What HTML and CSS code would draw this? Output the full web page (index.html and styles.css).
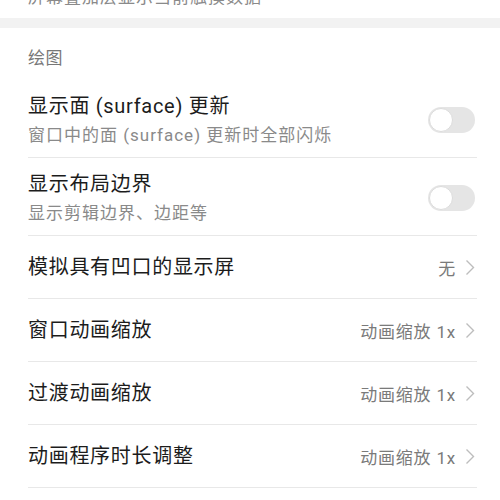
FILE: index.html
```html
<!DOCTYPE html>
<html lang="zh-CN">
<head>
  <meta charset="UTF-8">
  <meta name="viewport" content="width=device-width, initial-scale=1.0">
  <title>开发者选项</title>
  <link rel="stylesheet" href="styles.css">
</head>
<body>
  <!-- tail of the previous group, scrolled mostly out of view -->
  <div class="prev-tail">
    <p class="item-sub">屏幕叠加层显示当前触摸数据</p>
  </div>
  <div class="group-gap"></div>

  <div class="group">
    <div class="group-title">绘图</div>

    <div class="item">
      <div class="item-text">
        <div class="item-title">显示面 (surface) 更新</div>
        <div class="item-sub">窗口中的面 (surface) 更新时全部闪烁</div>
      </div>
      <div class="switch"><span class="knob"></span></div>
    </div>

    <div class="item">
      <div class="item-text">
        <div class="item-title">显示布局边界</div>
        <div class="item-sub">显示剪辑边界、边距等</div>
      </div>
      <div class="switch"><span class="knob"></span></div>
    </div>

    <div class="item single">
      <div class="item-title">模拟具有凹口的显示屏</div>
      <div class="item-value">无
        <svg class="chevron" width="10" height="17" viewBox="0 0 10 17"><polyline points="1.5,1.5 8.5,8.5 1.5,15.5" /></svg>
      </div>
    </div>

    <div class="item single">
      <div class="item-title">窗口动画缩放</div>
      <div class="item-value">动画缩放 1x
        <svg class="chevron" width="10" height="17" viewBox="0 0 10 17"><polyline points="1.5,1.5 8.5,8.5 1.5,15.5" /></svg>
      </div>
    </div>

    <div class="item single">
      <div class="item-title">过渡动画缩放</div>
      <div class="item-value">动画缩放 1x
        <svg class="chevron" width="10" height="17" viewBox="0 0 10 17"><polyline points="1.5,1.5 8.5,8.5 1.5,15.5" /></svg>
      </div>
    </div>

    <div class="item single">
      <div class="item-title">动画程序时长调整</div>
      <div class="item-value">动画缩放 1x
        <svg class="chevron" width="10" height="17" viewBox="0 0 10 17"><polyline points="1.5,1.5 8.5,8.5 1.5,15.5" /></svg>
      </div>
    </div>
  </div>
</body>
</html>
```

FILE: styles.css
```css
/* Page */
body {
  margin: 0;
  background: #fff;
  font-family: Roboto, "Noto Sans CJK SC", sans-serif;
  overflow: hidden;
}

/* Previous group, cut off at the top */
.prev-tail {
  margin-top: -16px;
  padding: 0 23px 8px 28px;
}

.prev-tail .item-sub {
  margin: 0;
}

.group-gap {
  height: 10px;
  background: #f2f2f2;
}

/* Group */
.group {
  padding: 0 23px 0 28px;
}

.group-title {
  padding: 18px 0 10px;
  font-size: 17px;
  line-height: 24px;
  color: #777;
  letter-spacing: 0.5px;
}

/* List items */
.item {
  display: flex;
  align-items: center;
  justify-content: space-between;
  padding: 12px 0 9px;
  border-bottom: 1px solid #e8e8e8;
}

.item.single {
  height: 63px;
  padding: 0;
  box-sizing: border-box;
}

.item-title {
  font-size: 20px;
  line-height: 28px;
  color: #1c1c1c;
  letter-spacing: 0.7px;
}

.item-sub {
  margin-top: 2px;
  font-size: 17px;
  line-height: 26px;
  color: #8a8a8a;
  letter-spacing: 1px;
}

.item-value {
  display: flex;
  align-items: center;
  gap: 9px;
  margin-right: 2px;
  font-size: 17px;
  color: #7a7a7a;
  letter-spacing: 0.8px;
}

.chevron polyline {
  fill: none;
  stroke: #bdbdbd;
  stroke-width: 1.4;
}

/* Switch (off state) */
.switch {
  position: relative;
  flex: none;
  width: 47px;
  height: 26px;
  margin-right: 2px;
  border-radius: 13px;
  background: #e5e5e5;
}

.knob {
  position: absolute;
  left: 1px;
  top: 1px;
  width: 22px;
  height: 22px;
  border-radius: 50%;
  background: #fff;
  border: 1px solid #dcdcdc;
}
```
